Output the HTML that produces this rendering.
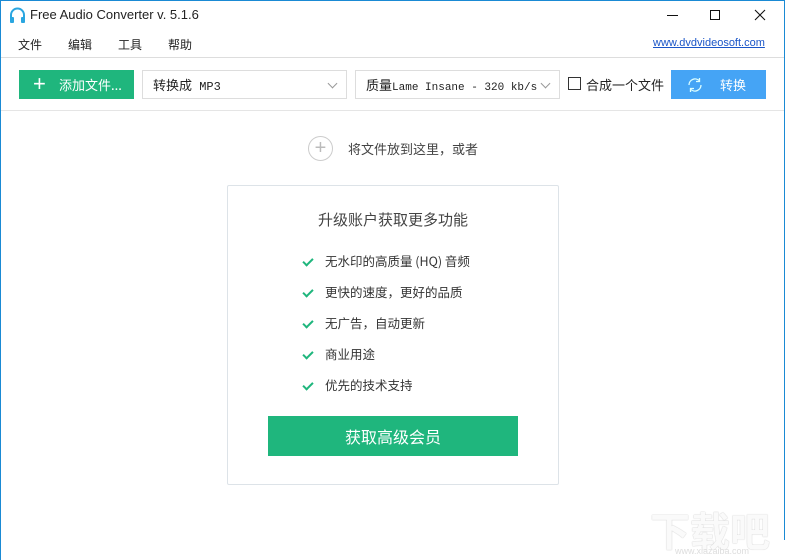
<!DOCTYPE html>
<html><head><meta charset="utf-8"><style>
*{margin:0;padding:0;box-sizing:border-box}
body{width:785px;height:560px;background:#fff;position:relative;overflow:hidden;font-family:"Liberation Sans","Noto Sans CJK SC",sans-serif;color:#222}
.a{position:absolute}
.cjk{font-family:"Noto Sans CJK SC",sans-serif}
.mono{font-family:"Liberation Mono","Noto Sans CJK SC",monospace}
.sel{border:1px solid #ddd;height:29px;font-size:13px;line-height:27px;padding-left:10px;white-space:nowrap;overflow:hidden}
.chev{position:absolute;right:10px;top:9px;width:7px;height:7px;border-right:1.5px solid #999;border-bottom:1.5px solid #999;transform:rotate(45deg)}
.li{left:300px;font-size:12.5px;color:#333}
.li:before{content:"";display:inline-block;width:4px;height:8px;border-right:2.5px solid #1fb67d;border-bottom:2.5px solid #1fb67d;transform:rotate(45deg);margin:0 14px 3px 5px;vertical-align:middle}
</style></head><body>
<div class="a" style="left:0;top:0;width:1px;height:560px;background:#1a8ad4"></div>
<div class="a" style="right:0;top:0;width:1px;height:540px;background:#1a8ad4"></div>
<div class="a" style="left:0;top:0;width:785px;height:1px;background:#1a8ad4"></div>
<svg class="a" style="left:9px;top:7px" width="17" height="17" viewBox="0 0 17 17"><path d="M2 11V8a6.5 6.5 0 0 1 13 0v3" fill="none" stroke="#2aa6e0" stroke-width="2"/><rect x="1" y="10" width="4" height="6" rx="1" fill="#2aa6e0"/><rect x="12" y="10" width="4" height="6" rx="1" fill="#2aa6e0"/></svg>
<div class="a" style="left:30px;top:7px;font-size:13px">Free Audio Converter v. 5.1.6</div>
<div class="a" style="left:667px;top:15px;width:11px;height:1px;background:#111"></div>
<div class="a" style="left:710px;top:10px;width:10px;height:10px;border:1px solid #111"></div>
<svg class="a" style="left:754px;top:9px" width="12" height="12"><path d="M1 1L11 11M11 1L1 11" stroke="#111" stroke-width="1.1"/></svg>
<div class="a cjk" style="top:36px;left:18px;font-size:12px">文件</div>
<div class="a cjk" style="top:36px;left:68px;font-size:12px">编辑</div>
<div class="a cjk" style="top:36px;left:118px;font-size:12px">工具</div>
<div class="a cjk" style="top:36px;left:168px;font-size:12px">帮助</div>
<div class="a" style="top:37px;left:653px;font-size:11px;color:#1a55c8;text-decoration:underline">www.dvdvideosoft.com</div>
<div class="a" style="left:1px;top:57px;width:783px;height:1px;background:#ddd"></div>
<div class="a" style="left:19px;top:70px;width:115px;height:29px;background:#1fb67d;color:#fff;font-size:13px;line-height:29px"><span style="position:absolute;left:14px;top:-1px;font-size:22px;font-weight:300">+</span><span class="cjk" style="position:absolute;left:40px">添加文件...</span></div>
<div class="a sel mono" style="left:142px;top:70px;width:205px;font-size:12px"><span class="cjk" style="font-size:13px">转换成</span> MP3<div class="chev"></div></div>
<div class="a sel mono" style="left:355px;top:70px;width:205px;font-size:11px"><span class="cjk" style="font-size:13px">质量</span>Lame Insane - 320 kb/s<div class="chev" style="background:#fff"></div></div>
<div class="a" style="left:568px;top:77px;width:13px;height:13px;border:1px solid #333"></div>
<div class="a cjk" style="left:586px;top:75px;font-size:13px">合成一个文件</div>
<div class="a" style="left:671px;top:70px;width:95px;height:29px;background:#45a4f5;color:#fff;font-size:13px;line-height:29px"><svg style="position:absolute;left:16px;top:7px" width="16" height="16" viewBox="0 0 16 16"><path d="M2 8a6 6 0 0 1 10.5-4M14 8a6 6 0 0 1-10.5 4" fill="none" stroke="#dff" stroke-width="1.3"/><path d="M12.5 1v3.5H9M3.5 15v-3.5H7" fill="none" stroke="#dff" stroke-width="1.3"/></svg><span class="cjk" style="position:absolute;left:49px">转换</span></div>
<div class="a" style="left:1px;top:110px;width:783px;height:1px;background:#e5e5e5"></div>
<div class="a" style="left:308px;top:136px;width:25px;height:25px;border:1px solid #ccc;border-radius:50%;color:#bbb;font-size:20px;line-height:22px;text-align:center;font-weight:300">+</div>
<div class="a cjk" style="left:348px;top:139px;font-size:13px;color:#444">将文件放到这里，或者</div>
<div class="a" style="left:227px;top:185px;width:332px;height:300px;border:1px solid #dde3e8;border-radius:2px"></div>
<div class="a cjk" style="left:318px;top:209px;font-size:15px;color:#444">升级账户获取更多功能</div>
<div class="a li cjk" style="top:251px">无水印的高质量 (HQ) 音频</div>
<div class="a li cjk" style="top:282px">更快的速度，更好的品质</div>
<div class="a li cjk" style="top:313px">无广告，自动更新</div>
<div class="a li cjk" style="top:344px">商业用途</div>
<div class="a li cjk" style="top:375px">优先的技术支持</div>
<div class="a cjk" style="left:268px;top:416px;width:250px;height:40px;background:#1fb67d;color:#fff;font-size:16px;line-height:40px;text-align:center">获取高级会员</div>
<div class="a cjk" style="left:650px;top:500px;font-size:40px;color:#fafafa;font-weight:bold;text-shadow:0 0 1px #aaa">下载吧</div>
<div class="a" style="left:675px;top:546px;font-size:9px;color:#ddd">www.xiazaiba.com</div>
</body></html>
